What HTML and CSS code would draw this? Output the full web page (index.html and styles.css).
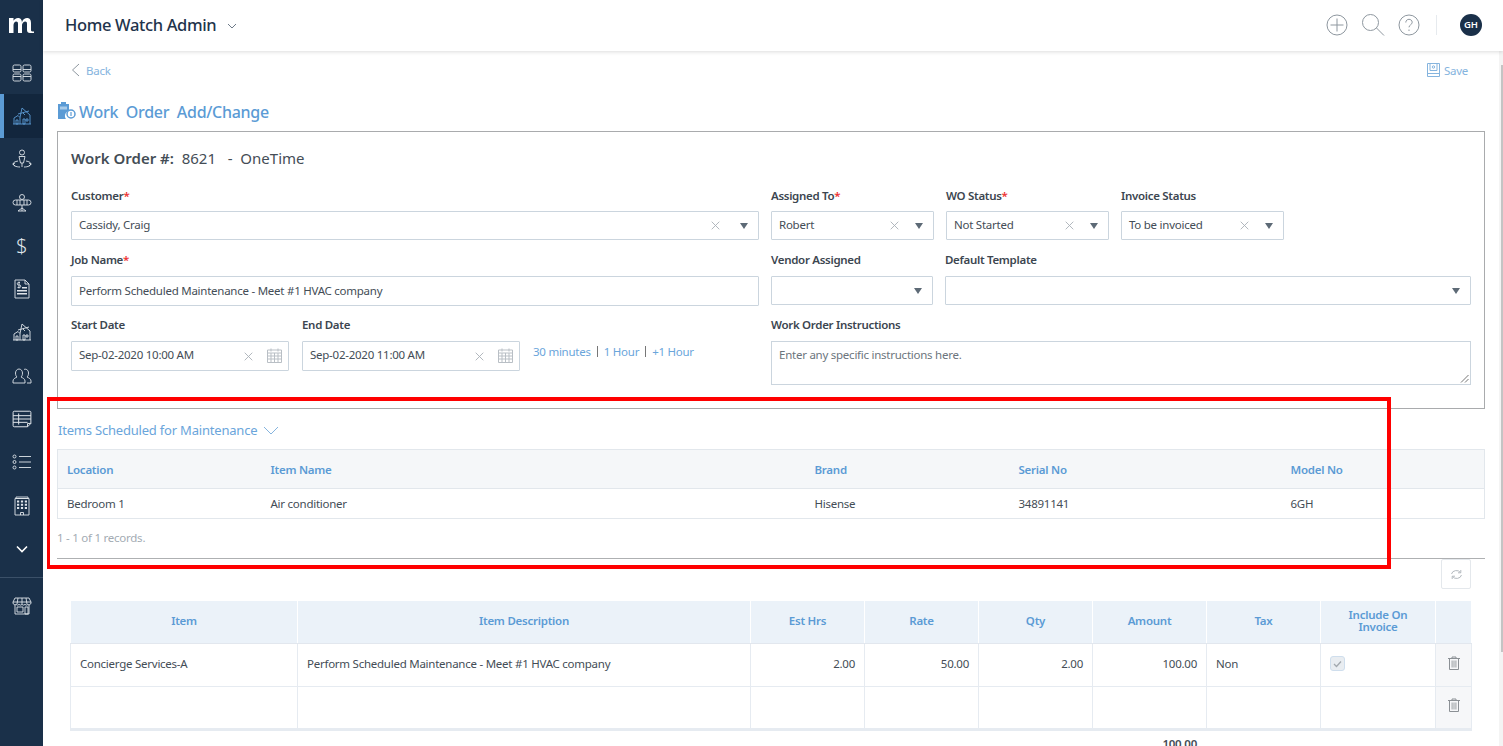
FILE: index.html
```html
<!DOCTYPE html>
<html lang="en">
<head>
    <meta charset="UTF-8">
    <title>Home Watch Admin - Work Order</title>
    <link rel="stylesheet" href="styles.css">
</head>
<body>
<svg class="defs" width="0" height="0">
    <symbol id="x-mark" viewBox="0 0 9 9"><path d="M.7.700l7.600 7.600M8.300.700L.7 8.300"/></symbol>
</svg>
<div class="app">
    <!-- Sidebar -->
    <nav class="sidebar">
        <div class="logo">
            <svg width="28" height="18" viewBox="0 0 28 18"><path d="M1 2h4.500v15H1zM5 6c1-3 3-4 5-4s4 1 4 5v10h-4V8c0-2-.6-2.600-1.800-2.600S5.500 7 5.500 9M14 6c1-3 3-4 5-4s4 1 4 5v7c0 1 .6 1.500 3 1.500V17h-4c-2 0-3-1-3-3V8c0-2-.6-2.600-1.800-2.600S14 7 14 9" fill="#fff"/></svg>
        </div>
        <a class="nav-item"><svg class="nav-icon" viewBox="0 0 20 18"><rect x="1" y="1" width="8" height="7" rx="1.500"/><rect x="11" y="1" width="8" height="7" rx="1.500"/><rect x="1" y="10" width="8" height="7" rx="1.500"/><rect x="11" y="10" width="8" height="7" rx="1.500"/><path d="M1 5.500h8M11 5.500h8M1 12.500h8M11 12.500h8"/></svg></a>
        <a class="nav-item active"><svg class="nav-icon blue" viewBox="0 0 20 18"><path d="M1 17h18M2 17v-6l4-2.500 2 2V17M8 10.500L10 1l8 7v9M6 7l11-3M4 13h2v4H4zM11 12h2v5h-2zM14 12h2v2h-2zM11 6l2 2"/></svg></a>
        <a class="nav-item"><svg class="nav-icon" viewBox="0 0 20 20"><circle cx="10" cy="3.500" r="2.500"/><path d="M7 7.500h6l-1.500 6.500h-3zM10 14v4M6 12c-3 .5-5 1.700-5 3 0 1.500 3 3 7 3M14 12c3 .5 5 1.700 5 3 0 1.500-3 3-7 3M3 14l-2 1 2 2M17 14l2 1-2 2"/></svg></a>
        <a class="nav-item"><svg class="nav-icon" viewBox="0 0 20 20"><circle cx="10" cy="4" r="2.500"/><rect x="1" y="7" width="18" height="5" rx="2.500"/><path d="M5 7v5M8 7v5M12 7v5M15 7v5M10 12v6M6 18h8l-4-3z"/></svg></a>
        <a class="nav-item"><span class="nav-dollar">$</span></a>
        <a class="nav-item"><svg class="nav-icon" viewBox="0 0 16 20"><path d="M1 1h10l4 4v14H1zM11 1v4h4"/><path class="fill" d="M3 11h10v1.500H3zM3 14h10v1.500H3zM8 8h5v1.500H8z"/><path d="M6 3.500H4.500a1 1 0 0 0 0 2.500h1a1 1 0 0 1 0 2.500H3.500M5 2.500v7"/></svg></a>
        <a class="nav-item"><svg class="nav-icon" viewBox="0 0 20 18"><path d="M1 17h18M2 17v-6l4-2.500 2 2V17M8 10.500L10 1l8 7v9M6 7l11-3M4 13h2v4H4zM11 12h2v5h-2zM14 12h2v2h-2zM11 6l2 2"/></svg></a>
        <a class="nav-item"><svg class="nav-icon" viewBox="0 0 20 16"><path d="M1 15v-2c0-2 2-3 4-4-1-1-1.500-2-1.500-4C3.500 3 5 1 7 1s3.500 2 3.500 4c0 2-.5 3-1.500 4 2 1 4 2 4 4v2zM12 1.500c2-1 4.500.5 4.500 3.500 0 2-.5 3-1.500 4 2 1 4 2 4 4v2h-4"/></svg></a>
        <a class="nav-item"><svg class="nav-icon" viewBox="0 0 18 16"><path d="M2 1h14a1 1 0 0 1 1 1v10l-3 3H2a1 1 0 0 1-1-1V2a1 1 0 0 1 1-1zM1 5h16M1 8h16M1 11h13M6 3v10M14 15v-3h3"/></svg></a>
        <a class="nav-item"><svg class="nav-icon" viewBox="0 0 20 16"><circle cx="2.500" cy="2.500" r="1.500"/><circle cx="2.500" cy="8" r="1.500"/><circle cx="2.500" cy="13.500" r="1.500"/><path d="M7 2.500h12M7 8h12M7 13.500h12"/></svg></a>
        <a class="nav-item"><svg class="nav-icon" viewBox="0 0 16 20"><path d="M1 2.500h14V19H1zM2 1h12v1.500H2zM6.500 19v-2.500h3V19"/><path class="fill" d="M3 4.500h2.200v2H3zM6.900 4.500h2.200v2H6.900zM10.800 4.500H13v2h-2.200zM3 7.800h2.200v2H3zM6.900 7.800h2.200v2H6.900zM10.800 7.800H13v2h-2.200zM3 11.100h2.200v2H3zM6.900 11.100h2.200v2H6.900zM10.800 11.100H13v2h-2.200z"/></svg></a>
        <a class="nav-item"><svg class="nav-chevron" viewBox="0 0 12 8"><path d="M1 1.500l5 5 5-5"/></svg></a>
        <div class="nav-divider"></div>
        <a class="nav-item"><svg class="nav-icon" viewBox="0 0 20 18"><path d="M3 1h14l2 4v1a2 2 0 0 1-3 1.500 2.500 2.500 0 0 1-3 0 2.500 2.500 0 0 1-3 0 2.500 2.500 0 0 1-3 0 2.500 2.500 0 0 1-3 0A2 2 0 0 1 1 6V5zM1 5h18M6 1L5 7M10 1v6M14 1l1 6M3 8v9h14V8M5 10h6v5H5zM13 10h3v7h-3z"/></svg></a>
    </nav>

    <div class="main">
        <!-- Top bar -->
        <header class="topbar">
            <div class="brand">Home Watch Admin</div>
            <svg class="brand-caret" viewBox="0 0 10 6"><path d="M1 1l4 4 4-4"/></svg>
            <div class="top-actions">
                <svg class="top-icon" width="22" height="22" viewBox="0 0 22 22"><circle cx="11" cy="11" r="10"/><path d="M11 4.500v13M4.500 11h13"/></svg>
                <svg class="top-icon" width="24" height="24" viewBox="0 0 24 24"><circle cx="9.500" cy="9.500" r="8"/><path d="M15.500 15l7.500 7.500"/></svg>
                <svg class="top-icon" width="22" height="22" viewBox="0 0 22 22"><circle cx="11" cy="11" r="10"/><path d="M7.800 8.500c0-2 1.500-3.200 3.200-3.200s3.200 1.200 3.200 3c0 2.500-3.200 2.500-3.200 5M11 15.500v1.500"/></svg>
                <div class="top-sep"></div>
                <div class="avatar">GH</div>
            </div>
        </header>

        <div class="page-body">
            <div class="content">
                <div class="action-bar">
                    <a class="back">
                        <svg width="9" height="14" viewBox="0 0 9 14"><path d="M8 1L1.500 7 8 13"/></svg>
                        Back
                    </a>
                    <a class="save">
                        <svg width="13" height="14" viewBox="0 0 13 14"><path d="M.5.500h12v13H.5zM3 .500v7h7v-7M.5 10.500h12"/><circle cx="6.500" cy="4" r="1.200"/></svg>
                        Save
                    </a>
                </div>

                <h1 class="page-title">
                    <svg width="19" height="19" viewBox="0 0 19 19"><path d="M1 3h3V1h5v2h3v7a5 5 0 0 0-3 8H1z" fill="#5b9bd5"/><path d="M3 5.500h7v3H3z" fill="#a9cbe9"/><circle cx="14" cy="13" r="4" fill="#fff" stroke="#5b9bd5" stroke-width="1.500"/><path d="M14 11v4" stroke="#5b9bd5" stroke-width="1.200"/></svg>
                    <span>Work&nbsp; Order&nbsp; Add/Change</span>
                </h1>

                <!-- Work order form -->
                <section class="panel">
                    <div class="wo-title"><b>Work Order #:</b>&nbsp; 8621 &nbsp; - &nbsp;OneTime</div>

                    <div class="form-row">
                        <div class="col-left">
                            <label class="field-label">Customer<i>*</i></label>
                            <div class="select"><span>Cassidy, Craig</span><svg class="clear clear-wide"><use href="#x-mark"/></svg><em class="arrow"></em></div>
                        </div>
                        <div class="col-right">
                            <div class="field-third">
                                <label class="field-label">Assigned To<i>*</i></label>
                                <div class="select"><span>Robert</span><svg class="clear"><use href="#x-mark"/></svg><em class="arrow"></em></div>
                            </div>
                            <div class="field-third">
                                <label class="field-label">WO Status<i>*</i></label>
                                <div class="select"><span>Not Started</span><svg class="clear"><use href="#x-mark"/></svg><em class="arrow"></em></div>
                            </div>
                            <div class="field-third">
                                <label class="field-label">Invoice Status</label>
                                <div class="select"><span>To be invoiced</span><svg class="clear"><use href="#x-mark"/></svg><em class="arrow"></em></div>
                            </div>
                        </div>
                    </div>

                    <div class="form-row tight lift">
                        <div class="col-left">
                            <label class="field-label">Job Name<i>*</i></label>
                            <div class="select tall"><span>Perform Scheduled Maintenance - Meet #1 HVAC company</span></div>
                        </div>
                        <div class="col-right">
                            <div class="field-vendor">
                                <label class="field-label">Vendor Assigned</label>
                                <div class="select"><span></span><em class="arrow"></em></div>
                            </div>
                            <div class="field-grow">
                                <label class="field-label">Default Template</label>
                                <div class="select"><span></span><em class="arrow"></em></div>
                            </div>
                        </div>
                    </div>

                    <div class="form-row lift">
                        <div class="col-left dates">
                            <div class="field-date">
                                <label class="field-label">Start Date</label>
                                <div class="select date"><span>Sep-02-2020 10:00 AM</span><svg class="clear"><use href="#x-mark"/></svg>
                                    <svg class="cal" width="15" height="15" viewBox="0 0 15 15"><path d="M.5 2h14v12.500H.5zM.5 5h14M.5 8h14M.5 11h14M4 5v9.500M7.500 5v9.500M11 5v9.500M4 .5v3M11 .5v3"/></svg>
                                </div>
                            </div>
                            <div class="field-date">
                                <label class="field-label">End Date</label>
                                <div class="select date"><span>Sep-02-2020 11:00 AM</span><svg class="clear"><use href="#x-mark"/></svg>
                                    <svg class="cal" width="15" height="15" viewBox="0 0 15 15"><path d="M.5 2h14v12.500H.5zM.5 5h14M.5 8h14M.5 11h14M4 5v9.500M7.500 5v9.500M11 5v9.500M4 .5v3M11 .5v3"/></svg>
                                </div>
                            </div>
                            <div class="quick-links"><a>30 minutes</a><b></b><a>1 Hour</a><b></b><a>+1 Hour</a></div>
                        </div>
                        <div class="col-right stack">
                            <label class="field-label">Work Order Instructions</label>
                            <div class="textarea">Enter any specific instructions here.
                                <svg class="grip" width="9" height="9" viewBox="0 0 9 9"><path d="M8.500 1L1 8.500M8.500 5L5 8.500"/></svg>
                            </div>
                        </div>
                    </div>
                </section>

                <!-- Items scheduled -->
                <div class="section-toggle">
                    Items Scheduled for Maintenance
                    <svg width="16" height="9" viewBox="0 0 16 9"><path d="M1 1l7 7 7-7"/></svg>
                </div>
                <table class="items-table">
                    <thead>
                        <tr><th class="c-loc">Location</th><th class="c-item">Item Name</th><th class="c-brand">Brand</th><th class="c-serial">Serial No</th><th>Model No</th></tr>
                    </thead>
                    <tbody>
                        <tr><td>Bedroom 1</td><td>Air conditioner</td><td>Hisense</td><td>34891141</td><td>6GH</td></tr>
                    </tbody>
                </table>
                <div class="records">1 - 1 of 1 records.</div>
                <hr class="rule">

                <div class="refresh-row">
                    <button class="refresh">
                        <svg width="13" height="11" viewBox="0 0 13 11"><path d="M1.500 5a5 4.500 0 0 1 9-1.500M11.500 6a5 4.500 0 0 1-9 1.500M10.800 1v2.800H8M2.200 10V7.200H5"/></svg>
                    </button>
                </div>

                <!-- Invoice lines -->
                <table class="lines-table">
                    <thead>
                        <tr>
                            <th class="l-item">Item</th><th class="l-desc">Item Description</th><th class="l-num">Est Hrs</th><th class="l-num">Rate</th><th class="l-num">Qty</th><th class="l-num">Amount</th><th class="l-num">Tax</th><th class="l-inc">Include On Invoice</th><th class="l-del"></th>
                        </tr>
                    </thead>
                    <tbody>
                        <tr>
                            <td>Concierge Services-A</td>
                            <td>Perform Scheduled Maintenance - Meet #1 HVAC company</td>
                            <td class="num">2.00</td><td class="num">50.00</td><td class="num">2.00</td><td class="num">100.00</td>
                            <td>Non</td>
                            <td><span class="checkbox"><svg width="9" height="8" viewBox="0 0 9 8"><path d="M1 4l2.500 2.500L8 1.500"/></svg></span></td>
                            <td class="del"><svg class="trash" width="12" height="14" viewBox="0 0 12 14"><path d="M0 2.500h12M4 2.500V1h4v1.500M1.500 2.500v11h9v-11"/><path class="bars" d="M3.500 4.500h1.200v7H3.500zM5.400 4.500h1.200v7H5.400zM7.300 4.500h1.200v7H7.300z"/></svg></td>
                        </tr>
                        <tr>
                            <td></td><td></td><td></td><td></td><td></td><td></td><td></td><td></td>
                            <td class="del"><svg class="trash" width="12" height="14" viewBox="0 0 12 14"><path d="M0 2.500h12M4 2.500V1h4v1.500M1.500 2.500v11h9v-11"/><path class="bars" d="M3.500 4.500h1.200v7H3.500zM5.400 4.500h1.200v7H5.400zM7.300 4.500h1.200v7H7.300z"/></svg></td>
                        </tr>
                    </tbody>
                </table>
                <div class="total">100.00</div>

                <!-- Annotation box from the screenshot -->
                <div class="highlight"></div>
            </div>
            <div class="scrollbar"><div class="scroll-thumb"></div></div>
        </div>
    </div>
</div>
</body>
</html>
```

FILE: styles.css
```css
/* General */
* {
    margin: 0;
    padding: 0;
    box-sizing: border-box;
}
html, body {
    height: 100%;
    overflow: hidden;
}
body {
    font-family: 'Noto Sans', sans-serif;
    font-size: 11.5px;
    letter-spacing: -0.25px;
    color: #444d56;
    background: #fff;
}
.defs {
    position: absolute;
}
.app {
    display: flex;
    height: 746px;
}

/* Sidebar */
.sidebar {
    width: 43px;
    flex: none;
    background: #1a3049;
}
.logo {
    height: 51px;
    display: flex;
    align-items: center;
    justify-content: center;
    padding-bottom: 1px;
}
.nav-item {
    display: flex;
    align-items: center;
    justify-content: center;
    height: 43.3px;
}
.nav-item.active {
    background: #12263d;
    box-shadow: inset 4px 0 0 #5b9bd5;
}
.nav-icon {
    width: 20px;
    height: 20px;
    fill: none;
    stroke: #dfe4ea;
    stroke-width: 0.9;
}
.nav-icon.blue {
    stroke: #5b9bd5;
}
.nav-icon .fill {
    fill: #dfe4ea;
    stroke: none;
}
.nav-dollar {
    color: #dfe4ea;
    font-size: 20px;
    font-weight: 300;
}
.nav-chevron {
    width: 12px;
    height: 8px;
    fill: none;
    stroke: #fff;
    stroke-width: 1.600;
}
.nav-divider {
    border-top: 1px solid #3b5068;
    margin-top: 6px;
    margin-bottom: 7px;
}

/* Main column */
.main {
    flex: 1;
    min-width: 0;
    display: flex;
    flex-direction: column;
}
.topbar {
    height: 51px;
    flex: none;
    display: flex;
    align-items: center;
    padding: 0 21px 2px 22px;
    background: #fff;
    box-shadow: 0 1px 4px rgba(0,0,0,0.14);
    position: relative;
    z-index: 2;
}
.brand {
    font-size: 16.500px;
    font-weight: 500;
    letter-spacing: -0.35px;
    color: #1f344c;
}
.brand-caret {
    width: 10px;
    height: 6px;
    margin-left: 11px;
    margin-top: 3px;
    fill: none;
    stroke: #6d7a88;
}
.top-actions {
    margin-left: auto;
    display: flex;
    align-items: center;
}
.top-icon {
    fill: none;
    stroke: #8e979f;
    margin-right: 13px;
}
.top-sep {
    width: 1px;
    height: 20px;
    background: #e6eaee;
    margin: 0 23px 0 3px;
}
.avatar {
    width: 22px;
    height: 22px;
    border-radius: 50%;
    background: #1a3049;
    color: #fff;
    font-size: 9.500px;
    font-weight: 600;
    letter-spacing: 0;
    display: flex;
    align-items: center;
    justify-content: center;
}

/* Content */
.page-body {
    flex: 1;
    min-height: 0;
    display: flex;
}
.content {
    flex: 1;
    min-width: 0;
    overflow: hidden;
    padding: 0 14px;
    position: relative;
}
.action-bar {
    display: flex;
    justify-content: space-between;
    align-items: center;
    height: 38px;
    padding: 0 17px 0 14px;
}
.back, .save {
    display: flex;
    align-items: center;
    color: #85b4de;
}
.back svg {
    fill: none;
    stroke: #8e979f;
    margin-right: 6px;
}
.save svg {
    fill: none;
    stroke: #85b4de;
    margin-right: 4px;
}
.page-title {
    display: flex;
    align-items: center;
    font-size: 16px;
    font-weight: 500;
    letter-spacing: -0.3px;
    color: #5b9bd5;
    height: 22px;
    margin-top: 12px;
}
.page-title svg {
    margin-right: 3px;
    margin-bottom: 3px;
}
.panel {
    border: 1px solid #a9abad;
    height: 278px;
    margin-top: 8px;
    padding: 0 13px;
}
.wo-title {
    font-size: 15px;
    letter-spacing: 0;
    margin-top: 16px;
    margin-bottom: 20px;
    line-height: 20px;
}
.wo-title b {
    font-weight: 600;
}

/* Form */
.form-row {
    display: flex;
    gap: 12px;
    margin-bottom: 13px;
}
.form-row.tight {
    margin-bottom: 12px;
}
.col-left {
    width: 688px;
    flex: none;
}
.col-right {
    flex: 1;
    display: flex;
    gap: 12px;
}
.col-right.stack {
    display: block;
}
.field-third {
    width: 163px;
}
.field-vendor {
    width: 162px;
}
.field-grow {
    flex: 1;
}
.field-label {
    display: block;
    font-weight: 600;
    letter-spacing: -0.3px;
    color: #3c4650;
    line-height: 16px;
    margin-bottom: 7px;
}
.lift .field-label {
    margin-top: -1px;
    margin-bottom: 8px;
}
.field-label i {
    color: #e33;
    font-style: normal;
}
.select {
    display: flex;
    align-items: center;
    height: 29px;
    border: 1px solid #cbd5de;
    border-radius: 1px;
    padding: 0 7px 2px;
    background: #fff;
}
.select.tall {
    height: 30px;
}
.select span {
    flex: 1;
    white-space: nowrap;
}
.clear {
    width: 9px;
    height: 9px;
    fill: none;
    stroke: #a9b0b7;
    stroke-width: 0.9;
    margin-right: 16px;
    margin-top: 2px;
}
.clear-wide {
    margin-right: 20px;
}
.arrow {
    border-left: 4.500px solid transparent;
    border-right: 4.500px solid transparent;
    border-top: 6px solid #5d6a76;
    margin-right: 3px;
    margin-top: 2px;
}
.dates {
    display: flex;
    gap: 13px;
}
.field-date {
    width: 218px;
}
.date {
    height: 30px;
    padding: 0 6px 4px 7px;
}
.date .clear {
    margin-right: 14px;
    margin-top: 4px;
}
.cal {
    fill: none;
    stroke: #b9bfc5;
    margin-top: 3px;
}
.quick-links {
    display: flex;
    align-items: center;
    height: 20px;
    margin-top: 23px;
    white-space: nowrap;
}
.quick-links a {
    color: #6aa5db;
}
.quick-links b {
    width: 1px;
    height: 11px;
    background: #777;
    margin: 0 6px;
}
.textarea {
    position: relative;
    height: 44px;
    border: 1px solid #cbd5de;
    padding: 5px 7px;
    color: #6c757d;
}
.grip {
    position: absolute;
    right: 1px;
    bottom: 1px;
    fill: none;
    stroke: #777;
}

/* Items table */
.section-toggle {
    display: flex;
    align-items: center;
    gap: 6px;
    height: 20px;
    margin-top: 11px;
    margin-bottom: 9px;
    padding-left: 1px;
    color: #6aa5db;
    font-size: 13px;
    letter-spacing: -0.2px;
}
.section-toggle svg {
    fill: none;
    stroke: #85b4de;
}
table {
    border-collapse: collapse;
    table-layout: fixed;
}
.items-table {
    width: 100%;
}
.items-table th {
    height: 39px;
    background: #f5f7f9;
    color: #5b9bd5;
    font-weight: 600;
    text-align: left;
    padding: 0 9px;
    border-top: 1px solid #e2e7ec;
    border-bottom: 1px solid #e2e7ec;
}
.items-table td {
    height: 30px;
    padding: 0 9px;
    border-bottom: 1px solid #e2e7ec;
}
.items-table th:first-child, .items-table td:first-child {
    border-left: 1px solid #e2e7ec;
}
.items-table th:last-child, .items-table td:last-child {
    border-right: 1px solid #e2e7ec;
}
.c-loc { width: 204px; }
.c-item { width: 544px; }
.c-brand { width: 204px; }
.c-serial { width: 272px; }
.records {
    color: #a3abb3;
    line-height: 16px;
    margin-top: 11px;
}
.rule {
    border: none;
    border-top: 1px solid #aeb0b2;
    margin-top: 12px;
}

/* Refresh */
.refresh-row {
    display: flex;
    justify-content: flex-end;
    padding-right: 14px;
}
.refresh {
    width: 30px;
    height: 30px;
    background: #fff;
    border: 1px solid #e4e8ec;
    border-radius: 2px;
    display: flex;
    align-items: center;
    justify-content: center;
}
.refresh svg {
    fill: none;
    stroke: #b4babf;
}

/* Lines table */
.lines-table {
    width: 1401px;
    margin-left: 13px;
    margin-top: 11px;
    border-bottom: 3px solid #e6ebf1;
}
.lines-table th {
    height: 43px;
    background: #ebf2f9;
    color: #5b9bd5;
    font-weight: 600;
    line-height: 12px;
    text-align: center;
    border: 1px solid #fff;
    border-bottom: 1px solid #e2e7ee;
    padding: 0 10px 3px;
}
.lines-table td {
    height: 43px;
    padding: 0 9px 4px;
    border: 1px solid #e6ebf1;
}
.lines-table td.num {
    text-align: right;
}
.lines-table td.del {
    background: #f6f7f9;
    text-align: center;
    padding: 0 9px 6px;
}
.l-item { width: 227px; }
.l-desc { width: 453px; }
.l-num { width: 114px; }
.l-inc { width: 115px; }
.l-del { width: 36px; }
.checkbox {
    display: inline-flex;
    align-items: center;
    justify-content: center;
    width: 15px;
    height: 15px;
    background: #e9edf1;
    border: 1px solid #cfdeed;
    border-radius: 3px;
    vertical-align: middle;
}
.checkbox svg {
    fill: none;
    stroke: #a3a9af;
    stroke-width: 1.300;
}
.trash {
    fill: none;
    stroke: #8b9095;
    vertical-align: middle;
}
.trash .bars {
    fill: #a9adb1;
    stroke: none;
}
.total {
    width: 1140px;
    text-align: right;
    font-weight: 600;
    margin-top: 5px;
}

/* Red annotation box */
.highlight {
    position: absolute;
    left: 4px;
    top: 346px;
    width: 1344px;
    height: 172px;
    border: 4px solid #f00;
    border-left-width: 3px;
    pointer-events: none;
}

/* Scrollbar strip */
.scrollbar {
    width: 4px;
    flex: none;
    background: #f4f4f4;
    padding: 14px 0 0 2px;
}
.scroll-thumb {
    height: 587px;
    background: #c4c4c4;
}
```
